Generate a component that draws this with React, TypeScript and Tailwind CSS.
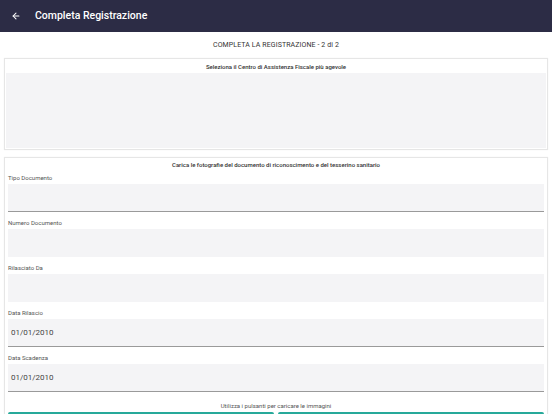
import * as React from "react";
import { ArrowLeft } from "lucide-react";

interface Field {
  label: string;
  value?: string;
  underline?: boolean;
}

const FIELDS: Field[] = [
  { label: "Tipo Documento", underline: true },
  { label: "Numero Documento" },
  { label: "Rilasciato Da" },
  { label: "Data Rilascio", value: "01/01/2010", underline: true },
  { label: "Data Scadenza", value: "01/01/2010", underline: true },
];

function FormField({ label, value, underline }: Field) {
  return (
    <div className="mb-[4px]">
      <div className="h-[13px] flex items-center px-[3px] text-[6px] text-[#555]">{label}</div>
      <div
        className={
          "mx-[3px] h-[28px] bg-[#f4f4f6] flex items-center px-[3px] text-[8px] text-[#444] " +
          (underline ? "border-b border-[#9a9a9a]" : "border-b border-transparent")
        }
      >
        {value}
      </div>
    </div>
  );
}

export default function App() {
  return (
    <div className="w-[552px] h-[414px] overflow-hidden bg-white font-['Roboto',sans-serif]">
      <div className="h-8 bg-[#2c2c45] flex items-center px-[11px] text-white">
        <ArrowLeft className="w-[10px] h-[10px]" strokeWidth={2.5} />
        <span className="ml-[14px] text-[10.5px] font-medium">Completa Registrazione</span>
      </div>

      <div className="h-[26px] flex items-center justify-center text-[7px] text-[#333] tracking-[0.1px]">
        COMPLETA LA REGISTRAZIONE - 2 di 2
      </div>

      <div className="mx-1 border border-[#e6e6e6] shadow-[0_0_1px_rgba(0,0,0,0.08)] p-[1px]">
        <div className="h-[13px] flex items-center justify-center text-[6px] font-medium text-[#333]">
          Seleziona il Centro di Assistenza Fiscale più agevole
        </div>
        <div className="h-[75px] bg-[#f4f4f6]" />
      </div>

      <div className="mx-1 mt-[7px] border border-[#e6e6e6] shadow-[0_0_1px_rgba(0,0,0,0.08)]">
        <div className="h-[13px] flex items-center justify-center text-[6px] font-medium text-[#333]">
          Carica le fotografie del documento di riconoscimento e del tesserino sanitario
        </div>
        {FIELDS.map((f) => (
          <FormField key={f.label} {...f} />
        ))}
        <div className="h-[16px] pt-[2px] flex items-center justify-center text-[6px] text-[#555]">
          Utilizza i pulsanti per caricare le immagini
        </div>
        <div className="grid grid-cols-2 gap-[4px] px-[3px]">
          <div className="h-[24px] bg-[#26a99a] rounded-t-[2px]" />
          <div className="h-[24px] bg-[#26a99a] rounded-t-[2px]" />
        </div>
      </div>
    </div>
  );
}
